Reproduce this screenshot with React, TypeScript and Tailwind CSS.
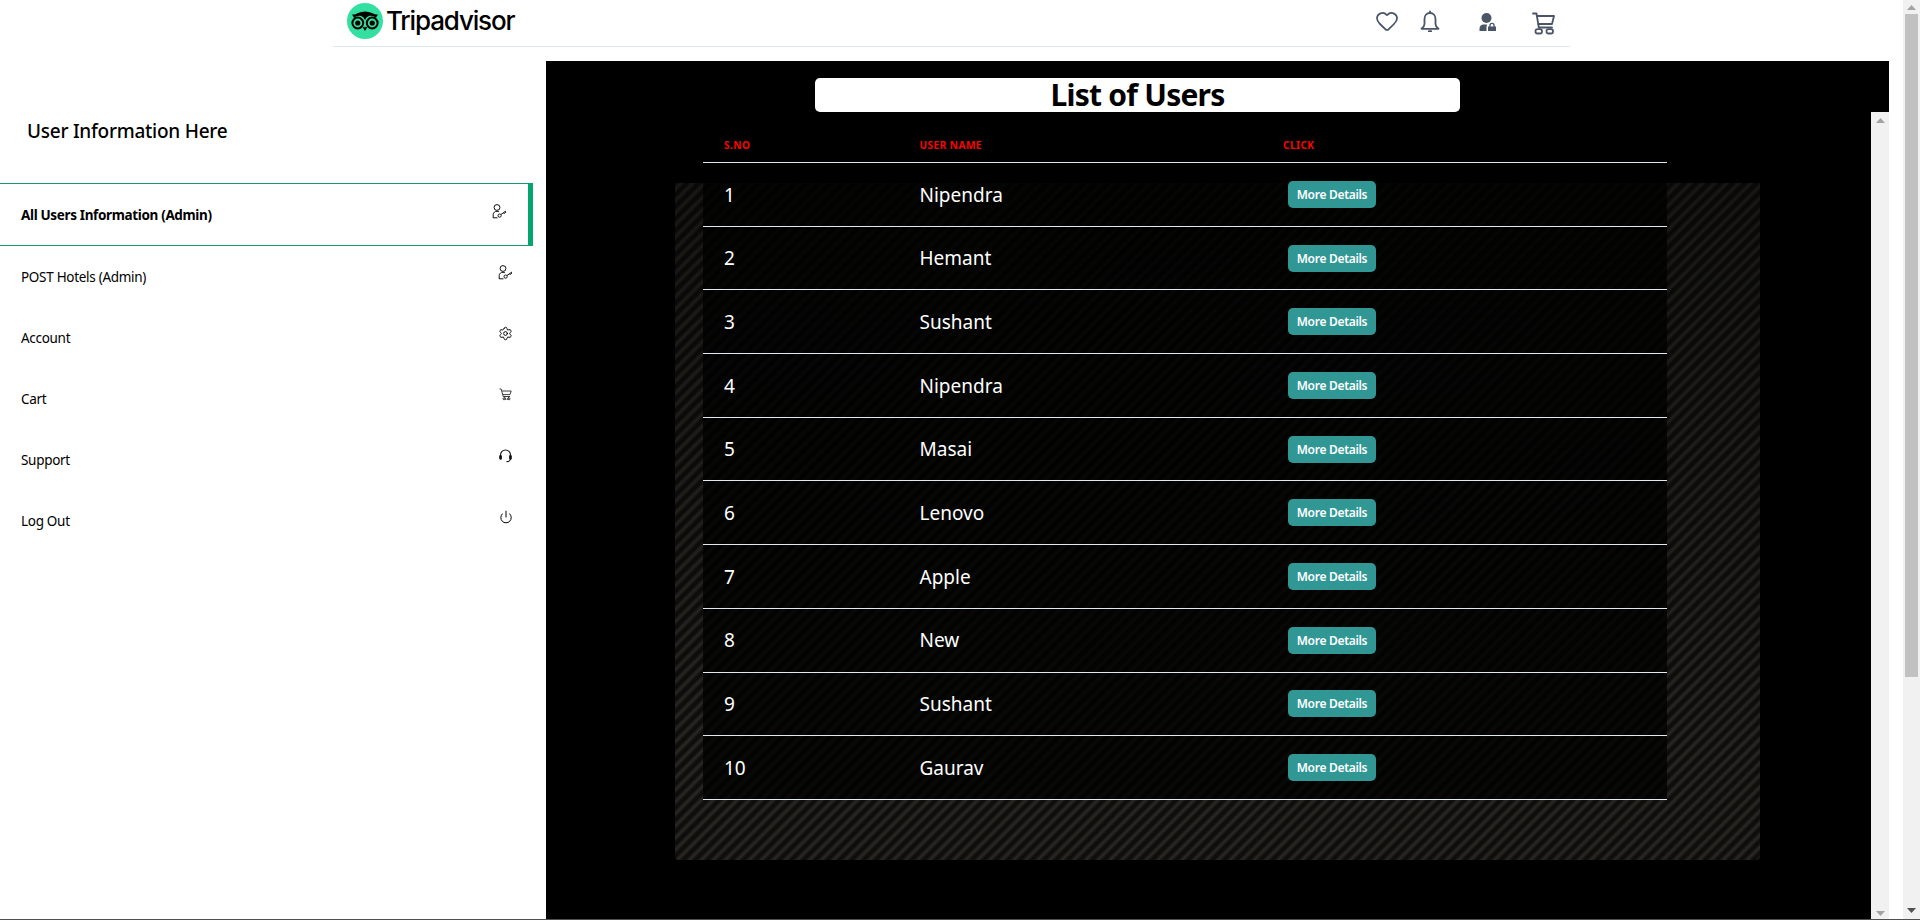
import { Heart, Settings, Power } from "lucide-react";

const users = ["Nipendra", "Hemant", "Sushant", "Nipendra", "Masai", "Lenovo", "Apple", "New", "Sushant", "Gaurav"];

function KeyUserIcon() {
  return (
    <svg width="15" height="15" viewBox="0 0 15 15" fill="none" stroke="#111" strokeWidth="1">
      <circle cx="5" cy="3.5" r="2.9" />
      <path d="M1.2 14V10.5C1.2 8.5 3 7.3 5 7.3C6 7.3 6.6 7.5 7 7.8" />
      <path d="M1.2 13.8H5.5" />
      <circle cx="7.6" cy="11.6" r="1.6" />
      <path d="M9 10.5L14 7M11.5 8.7L12.6 10M12.9 7.8L13.9 8.9" />
    </svg>
  );
}

function SmallCartIcon() {
  return (
    <svg width="13" height="13" viewBox="0 0 13 13" fill="none" stroke="#111" strokeWidth="0.8">
      <path d="M0.5 1H2.2L4.2 8.5H11" />
      <path d="M2.8 3H12.2L11 6.6H3.8" />
      <path d="M5.4 8.5L7 12M10 8.5L8 12" />
      <circle cx="5" cy="10.8" r="1" />
      <circle cx="10" cy="10.8" r="1" />
    </svg>
  );
}

function HeadsetIcon() {
  return (
    <svg width="13" height="14" viewBox="0 0 13 14" fill="none" stroke="#111" strokeWidth="1.1">
      <path d="M1.5 8V6A5 5 0 0 1 11.5 6V8" />
      <rect x="0.8" y="6.5" width="1.5" height="3.6" rx="0.7" fill="#111" />
      <rect x="10.7" y="6.5" width="1.5" height="3.6" rx="0.7" fill="#111" />
      <path d="M11.4 10.2C11.2 11.8 9.8 12.6 7.5 12.6" />
    </svg>
  );
}

function UserLockIcon() {
  return (
    <svg width="17" height="18" viewBox="0 0 17 18" fill="#4a5568">
      <circle cx="7.5" cy="5" r="5" />
      <path d="M0.5 18V15.5C0.5 13 2.5 11.5 4.5 11.5H8C8 12 7.5 13 7.5 14V18Z" />
      <path d="M9 13.5H10.3V12.5A2.7 2.7 0 0 1 15.7 12.5V13.5H17V18H9ZM11.6 13.5H14.4V12.5A1.4 1.4 0 0 0 11.6 12.5Z" fillRule="evenodd" />
    </svg>
  );
}

function BellIcon() {
  return (
    <svg width="20" height="23" viewBox="0 0 20 23" fill="none" stroke="#4a5568" strokeWidth="1.8" strokeLinecap="round" strokeLinejoin="round">
      <path d="M10 1.5V3" />
      <path d="M10 3C6.5 3 4.5 5.8 4.5 9V14C4.5 16 3.2 17.5 1.5 18.8H18.5C16.8 17.5 15.5 16 15.5 14V9C15.5 5.8 13.5 3 10 3Z" />
      <path d="M8.8 21.2H11.2" />
    </svg>
  );
}

function CartIcon() {
  return (
    <svg width="23" height="23" viewBox="0 0 23 23" fill="none" stroke="#4a5568" strokeWidth="1.8" strokeLinecap="round" strokeLinejoin="round">
      <path d="M1 1.5H4.5L6.8 15.5H20" />
      <path d="M5 4H22L20 12H6.3" />
      <rect x="3.5" y="17.2" width="6.5" height="4.3" rx="2.1" />
      <rect x="14.5" y="17.2" width="6.5" height="4.3" rx="2.1" />
    </svg>
  );
}

function OwlLogo() {
  return (
    <svg width="36" height="36" viewBox="0 0 36 36">
      <circle cx="18" cy="18" r="18" fill="#34e0a1" />
      <path d="M5 11.5C9 11.5 8.5 11 11 10C15.5 8 20.5 8 25 10C27.5 11 27.5 11.5 31 11.5C30 12.8 29.6 13.5 29 15C26 12 22 12 19.5 14.5L18 17L16.5 14.5C14 12 10 12 7 15C6.4 13.5 6 12.8 5 11.5Z" fill="#000" />
      <circle cx="10.8" cy="20" r="5.4" fill="#34e0a1" stroke="#000" strokeWidth="2" />
      <circle cx="25.2" cy="20" r="5.4" fill="#34e0a1" stroke="#000" strokeWidth="2" />
      <circle cx="10.8" cy="20" r="2.6" fill="#000" />
      <circle cx="25.2" cy="20" r="2.6" fill="#000" />
      <path d="M16.5 24L18 26.5L19.5 24" fill="none" stroke="#000" strokeWidth="1.6" />
    </svg>
  );
}

const menuItems = [
  { label: "POST Hotels (Admin)", icon: <KeyUserIcon /> },
  { label: "Account", icon: <Settings size={15} strokeWidth={1.5} color="#000" /> },
  { label: "Cart", icon: <SmallCartIcon /> },
  { label: "Support", icon: <HeadsetIcon /> },
  { label: "Log Out", icon: <Power size={14} strokeWidth={1.7} color="#000" /> },
];

function ScrollArrow({ up, color }: { up?: boolean; color: string }) {
  return (
    <svg width="9" height="5" viewBox="0 0 9 5" fill={color}>
      {up ? <path d="M4.5 0L9 5H0Z" /> : <path d="M0 0H9L4.5 5Z" />}
    </svg>
  );
}

export default function App() {
  return (
    <div className="flex h-[920px] w-[1920px] flex-col overflow-hidden bg-white font-['Noto_Sans',sans-serif]">
      <div className="flex min-h-0 flex-1">
        <div className="flex w-[1903px] flex-col">

          {/* header */}
          <header className="ml-[333px] flex h-[47px] w-[1237px] shrink-0 items-start justify-between border-b border-[#e2e8f0] pl-[14px]">
            <div className="mt-[3px] flex items-center gap-[3px]">
              <OwlLogo />
              <span className="font-['Inter',sans-serif] text-[26px] font-medium leading-[36px] tracking-[-1.15px] text-black">Tripadvisor</span>
            </div>
            <div className="flex items-start pr-[15px] text-[#4a5568]">
              <Heart size={24} strokeWidth={1.75} className="mt-[9px]" />
              <div className="ml-[21px] mt-[10px]"><BellIcon /></div>
              <div className="ml-[39px] mt-[13px]"><UserLockIcon /></div>
              <div className="ml-[36px] mt-[12px]"><CartIcon /></div>
            </div>
          </header>

          <div className="mt-[14px] flex min-h-0 flex-1">

            {/* sidebar */}
            <aside className="w-[546px] shrink-0">
              <h2 className="pl-[27px] pt-[57px] text-[19px] font-medium leading-[26px] tracking-[-0.25px] text-black">User Information Here</h2>
              <div className="mt-[39px] flex h-[63px] w-[533px] items-center justify-between border-y border-r-[5px] border-y-[#149e6f] border-r-[#03a66e] pl-[21px] pr-[21px]">
                <span className="pt-[2px] text-[13.5px] font-bold tracking-[-0.35px] text-black">All Users Information (Admin)</span>
                <span className="mb-[7px]"><KeyUserIcon /></span>
              </div>
              {menuItems.map((item) => (
                <div key={item.label} className="flex h-[61px] w-[533px] items-center justify-between pl-[21px] pr-[20px]">
                  <span className="pt-[2px] text-[13.5px] tracking-[-0.3px] text-black">{item.label}</span>
                  <span className="mb-[8px] flex w-[15px] justify-center">{item.icon}</span>
                </div>
              ))}
            </aside>

            {/* black panel */}
            <main className="flex w-[1343px] shrink-0 bg-black">
              <div className="w-[1325px] shrink-0">
                <div className="ml-[269px] mt-[17px] flex h-[34px] w-[645px] items-center justify-center rounded-[5px] bg-white">
                  <h1 className="text-[30px] font-bold leading-none tracking-[-0.75px] text-black">List of Users</h1>
                </div>
                <div className="ml-[129px] mt-[71px] flow-root h-[677px] w-[1085px] rounded-b-[4px] bg-[linear-gradient(to_bottom,rgba(0,0,0,0.4),rgba(0,0,0,0)_85%),repeating-linear-gradient(135deg,#0e0d0b_0px,#0e0d0b_1px,#2a2924_4.25px,#0e0d0b_7.5px,#0e0d0b_8.5px)]">
                  <div className="ml-[28px] mt-[-71px] w-[964px] bg-black/75">
                    <div className="grid h-[51px] grid-cols-[195.5px_363.5px_1fr] items-center border-b border-[#e2e8f0] pl-[21px] pt-[16px] text-[10px] font-bold uppercase tracking-[0.5px] text-[#ff0000]">
                      <span>S.No</span>
                      <span>User Name</span>
                      <span>Click</span>
                    </div>
                    {users.map((name, i) => (
                      <div key={i} className="grid h-[63.7px] grid-cols-[195.5px_363.5px_1fr] items-center border-b border-[#e2e8f0] pl-[21px] text-[19px] text-white">
                        <span className="pt-[1px]">{i + 1}</span>
                        <span className="pt-[1px]">{name}</span>
                        <div className="flex">
                          <button className="ml-[5px] h-[27px] w-[88px] rounded-[5px] bg-[#319795] pt-[1px] text-[12px] font-semibold tracking-[-0.3px] text-white">More Details</button>
                        </div>
                      </div>
                    ))}
                  </div>
                </div>
              </div>
              {/* inner scrollbar */}
              <div className="mt-[51px] flex w-[18px] flex-col items-center justify-between bg-[#f1f1f1] pb-[3px] pt-[6px]">
                <ScrollArrow up color="#a3a3a3" />
                <ScrollArrow color="#a3a3a3" />
              </div>
            </main>
          </div>
        </div>

        {/* page scrollbar */}
        <div className="flex w-[17px] flex-col bg-[#f1f1f1]">
          <div className="flex h-[14px] items-center justify-center"><ScrollArrow up color="#a3a3a3" /></div>
          <div className="mx-[2px] h-[663px] bg-[#c1c1c1]"></div>
          <div className="mt-auto flex h-[17px] items-center justify-center"><ScrollArrow color="#505050" /></div>
        </div>
      </div>
      <div className="h-px shrink-0 bg-[#505050]"></div>
    </div>
  );
}
